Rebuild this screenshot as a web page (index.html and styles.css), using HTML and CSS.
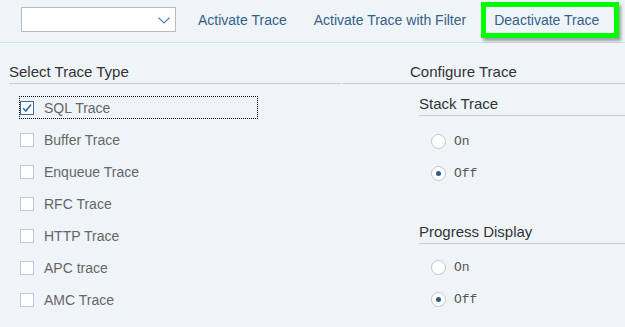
FILE: index.html
```html
<!DOCTYPE html>
<html>
<head>
<meta charset="utf-8">
<link rel="stylesheet" href="styles.css">
</head>
<body>
<div class="toolbar">
  <div class="dropdown">
    <svg class="chev" width="12" height="7" viewBox="0 0 12 7"><path d="M0.5 0.8 L6 6 L11.5 0.8" fill="none" stroke="#4f83b8" stroke-width="1.2"/></svg>
  </div>
  <span class="tb-link first">Activate Trace</span>
  <span class="tb-link">Activate Trace with Filter</span>
  <span class="tb-link highlight">Deactivate Trace</span>
</div>
<div class="main">
  <div class="col left">
    <div class="col-head">Select Trace Type</div>
    <ul class="checks">
      <li class="row"><span class="item focus"><span class="cb checked"><svg width="12" height="12" viewBox="0 0 12 12"><path d="M2.2 6.2 L4.8 9 L10 2.5" fill="none" stroke="#2a65a5" stroke-width="1.5"/></svg></span><span class="lbl">SQL Trace</span></span></li>
      <li class="row"><span class="item"><span class="cb"></span><span class="lbl">Buffer Trace</span></span></li>
      <li class="row"><span class="item"><span class="cb"></span><span class="lbl">Enqueue Trace</span></span></li>
      <li class="row"><span class="item"><span class="cb"></span><span class="lbl">RFC Trace</span></span></li>
      <li class="row"><span class="item"><span class="cb"></span><span class="lbl">HTTP Trace</span></span></li>
      <li class="row"><span class="item"><span class="cb"></span><span class="lbl">APC trace</span></span></li>
      <li class="row"><span class="item"><span class="cb"></span><span class="lbl">AMC Trace</span></span></li>
    </ul>
  </div>
  <div class="col right">
    <div class="col-head indent">Configure Trace</div>
    <div class="group">
      <div class="sub-head">Stack Trace</div>
      <ul class="radios">
        <li class="rrow"><span class="radio"></span><span class="rlbl">On</span></li>
        <li class="rrow"><span class="radio on"></span><span class="rlbl">Off</span></li>
      </ul>
    </div>
    <div class="group second">
      <div class="sub-head">Progress Display</div>
      <ul class="radios">
        <li class="rrow"><span class="radio"></span><span class="rlbl">On</span></li>
        <li class="rrow"><span class="radio on"></span><span class="rlbl">Off</span></li>
      </ul>
    </div>
  </div>
</div>
</body>
</html>
```
FILE: styles.css
```css
html, body {
  margin: 0;
  padding: 0;
  background: #eff4f9;
  font-family: "Liberation Sans", Arial, sans-serif;
  overflow: hidden;
}
.toolbar {
  height: 43px;
  box-sizing: border-box;
  padding-bottom: 3px;
  border-bottom: 1px solid #d8e2ec;
  display: flex;
  align-items: center;
}
.dropdown {
  margin-left: 21px;
  width: 155px;
  height: 25px;
  box-sizing: border-box;
  background: #fff;
  border: 1px solid #bababa;
  display: flex;
  align-items: center;
  justify-content: flex-end;
  padding-right: 5px;
}
.chev { display: block; margin-top: 2px; }
.tb-link {
  font-size: 14px;
  color: #346187;
  margin-left: 27px;
  white-space: nowrap;
}
.tb-link.first { margin-left: 22px; }
.tb-link.highlight {
  margin-left: 15px;
  border: 5px solid #00ff00;
  padding: 5px 15px 5px 8px;
  box-shadow: 2px 3px 3px rgba(0,0,0,0.35);
}
.main {
  display: flex;
}
.col.left {
  margin-left: 9px;
  width: 332px;
}
.col.right {
  margin-left: 1px;
  flex: 1;
}
.col-head {
  font-size: 15px;
  line-height: 20px;
  color: #333;
  padding-top: 19px;
  padding-bottom: 1px;
  border-bottom: 1px solid #c9cccf;
}
.col-head.indent { padding-left: 68px; }
ul { list-style: none; margin: 0; padding: 0; }
.checks { margin-top: 7px; }
.row {
  height: 32px;
  display: flex;
  align-items: center;
}
.row:first-child { height: 33px; }
.item {
  margin-left: 10px;
  width: 239px;
  height: 23px;
  box-sizing: border-box;
  border: 1px dotted transparent;
  display: flex;
  align-items: center;
}
.item.focus { border: 1px dotted #000; }
.cb {
  width: 14px;
  height: 14px;
  box-sizing: border-box;
  border: 1px solid #cdc3d5;
  background: #fff;
  display: flex;
  align-items: center;
  justify-content: center;
}
.cb.checked { border-color: #3d6d9e; }
.cb svg { display: block; }
.lbl {
  margin-left: 10px;
  font-size: 14px;
  color: #666;
}
.group { margin-left: 77px; margin-top: 9px; }
.group.second { margin-top: 32px; }
.sub-head {
  font-size: 15px;
  line-height: 20px;
  color: #333;
  padding-top: 1px;
  padding-bottom: 1px;
  border-bottom: 1px solid #c9cccf;
}
.radios { margin-top: 9px; }
.group.second .radios { margin-top: 7px; }
.rrow {
  height: 32px;
  display: flex;
  align-items: center;
}
.radio {
  margin-left: 12px;
  width: 15px;
  height: 15px;
  box-sizing: border-box;
  border-radius: 50%;
  border: 1px solid #c4c4c4;
  background: #fff;
  display: flex;
  align-items: center;
  justify-content: center;
}
.radio.on::after {
  content: "";
  width: 5px;
  height: 5px;
  border-radius: 50%;
  background: #2b5f92;
}
.rlbl {
  margin-left: 8px;
  font-family: "Liberation Mono", "DejaVu Sans Mono", monospace;
  font-size: 13px;
  color: #555;
}
```
